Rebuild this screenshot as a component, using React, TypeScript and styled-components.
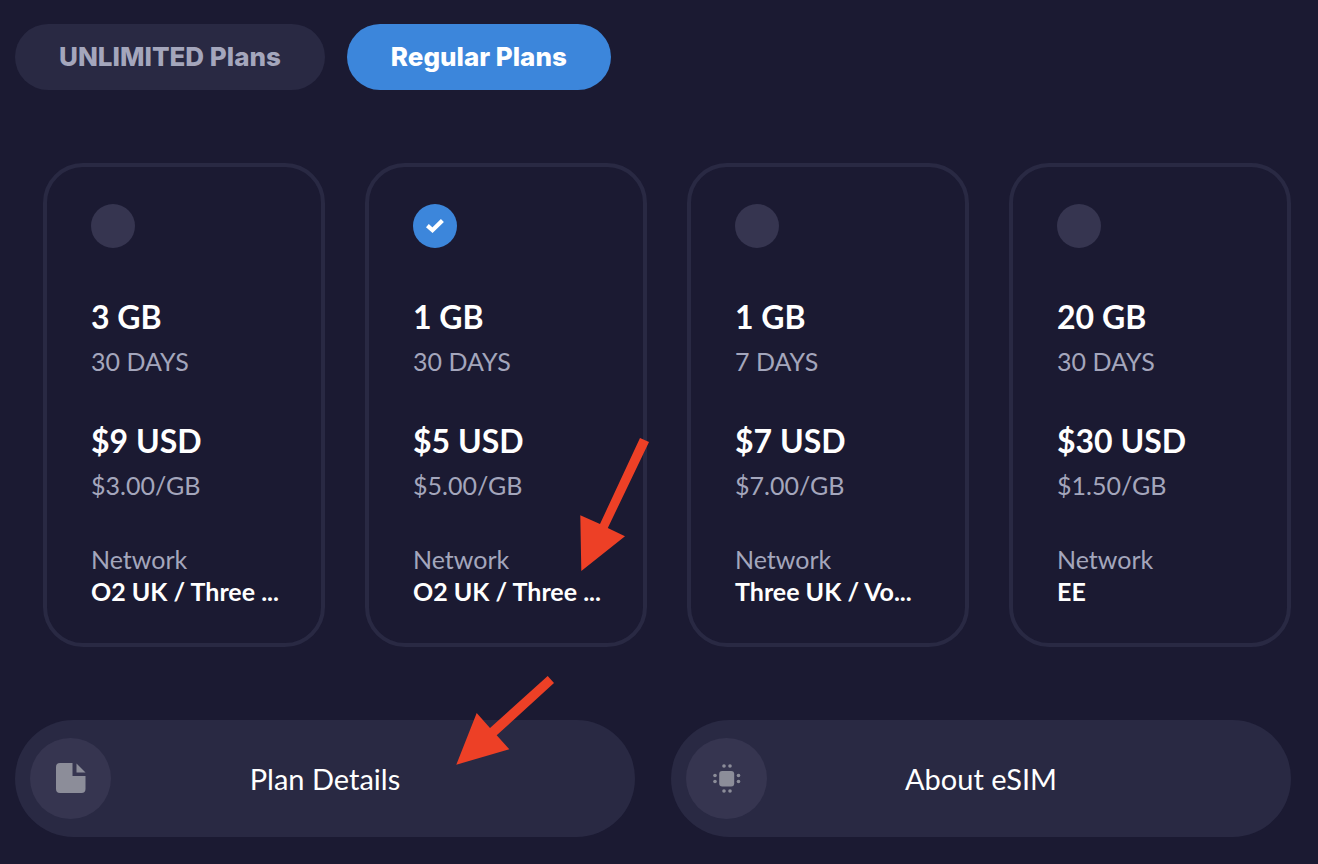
import React, { useState } from "react";
import styled, { createGlobalStyle } from "styled-components";

const GlobalStyle = createGlobalStyle`
  *, *::before, *::after { box-sizing: border-box; }
  body {
    margin: 0;
    background: #1b1a32;
    color: #ffffff;
    font-family: Lato, "Liberation Sans", sans-serif;
  }
  button, input { font: inherit; color: inherit; margin: 0; }
`;

const Page = styled.main`
  padding: 24px 27px 27px 15px;
`;

const Tabs = styled.div`
  display: flex;
  gap: 22px;
`;

const Tab = styled.button<{ $active: boolean }>`
  height: 66px;
  padding: 0 44px;
  border: 0;
  border-radius: 33px;
  background: ${(p) => (p.$active ? "#3c86db" : "#292943")};
  color: ${(p) => (p.$active ? "#ffffff" : "#a4a6bc")};
  font-family: Inter, "Liberation Sans", sans-serif;
  font-size: 26px;
  font-weight: 800;
  line-height: 32px;
  white-space: nowrap;
  cursor: pointer;
`;

const Plans = styled.div`
  display: grid;
  grid-template-columns: repeat(4, minmax(0, 1fr));
  gap: 40px;
  margin: 73px 0 73px 28px;
`;

const PlanCard = styled.label`
  position: relative;
  display: flex;
  flex-direction: column;
  gap: 36px;
  padding: 37px 44px 36px;
  border: 4px solid #292943;
  border-radius: 40px;
  white-space: nowrap;
  cursor: pointer;
`;

const RadioWrap = styled.span`
  display: grid;
  width: 44px;
  height: 44px;
  margin-bottom: 11px;
  place-items: center;

  > * { grid-area: 1 / 1; }
`;

const Radio = styled.input`
  appearance: none;
  width: 44px;
  height: 44px;
  border-radius: 50%;
  background: #363550;
  cursor: pointer;

  &:checked { background: #3c86db; }
`;

const Group = styled.span`
  display: flex;
  flex-direction: column;
`;

const Headline = styled.span`
  font-size: 32px;
  font-weight: 700;
  line-height: 44px;
`;

const Detail = styled.span`
  color: #a4a6bc;
  font-size: 25px;
  line-height: 44px;
`;

const NetworkLabel = styled(Detail)`
  line-height: 32px;
`;

const NetworkName = styled.span`
  font-size: 25px;
  font-weight: 700;
  line-height: 32px;
`;

const Actions = styled.div`
  display: grid;
  grid-template-columns: repeat(2, minmax(0, 1fr));
  gap: 36px;
`;

const ActionButton = styled.button`
  position: relative;
  display: grid;
  grid-template-columns: 81px 1fr 81px;
  align-items: center;
  padding: 18px 15px;
  border: 0;
  border-radius: 60px;
  background: #292943;
  font-size: 29px;
  line-height: 36px;
  cursor: pointer;
`;

const IconCircle = styled.span`
  display: grid;
  width: 81px;
  height: 81px;
  place-items: center;
  border-radius: 50%;
  background: #363550;
`;

const CardArrow = styled.svg`
  position: absolute;
  top: 271px;
  right: -7px;
  pointer-events: none;
`;

const ActionArrow = styled.svg`
  position: absolute;
  top: -44px;
  right: 81px;
  pointer-events: none;
`;

const plans = [
  { data: "3 GB", days: "30 DAYS", price: "$9 USD", rate: "$3.00/GB", network: "O2 UK / Three ..." },
  { data: "1 GB", days: "30 DAYS", price: "$5 USD", rate: "$5.00/GB", network: "O2 UK / Three ..." },
  { data: "1 GB", days: "7 DAYS", price: "$7 USD", rate: "$7.00/GB", network: "Three UK / Vo..." },
  { data: "20 GB", days: "30 DAYS", price: "$30 USD", rate: "$1.50/GB", network: "EE" },
];

const tabs = ["UNLIMITED Plans", "Regular Plans"];

const CheckMark = () => (
  <svg width="20" height="18" viewBox="0 0 20 18" fill="none" pointerEvents="none" aria-hidden="true">
    <path d="M2.4 8.6 7.5 13.2 17.4 3.4" stroke="#fff" strokeWidth="4.2" />
  </svg>
);

const NoteIcon = () => (
  <svg width="30" height="31" viewBox="0 0 30 31" fill="#8c8d99" aria-hidden="true">
    <path d="M4 0H16.5V13H29.5V26a4 4 0 0 1-4 4H4a4 4 0 0 1-4-4V4a4 4 0 0 1 4-4Z" />
    <path d="M20.5 0.5 29.5 9.5H20.5Z" />
  </svg>
);

const chipPins = [
  [11, 2], [17, 2], [11, 27], [17, 27],
  [2, 11.5], [2, 17.5], [25.5, 11.5], [25.5, 17.5],
];

const ChipIcon = () => (
  <svg width="28" height="30" viewBox="0 0 28 30" fill="#8c8d99" aria-hidden="true">
    <rect x="6.2" y="7" width="15" height="15.5" rx="3" />
    {chipPins.map(([x, y]) => (
      <circle key={`${x}-${y}`} cx={x} cy={y} r="1.8" />
    ))}
  </svg>
);

export default function App() {
  const [tab, setTab] = useState(1);
  const [selected, setSelected] = useState(1);

  return (
    <>
      <GlobalStyle />
      <Page>
        <Tabs>
          {tabs.map((name, i) => (
            <Tab key={name} type="button" $active={tab === i} aria-pressed={tab === i} onClick={() => setTab(i)}>
              {name}
            </Tab>
          ))}
        </Tabs>

        <Plans role="radiogroup" aria-label="Plans">
          {plans.map((plan, i) => (
            <PlanCard key={i} htmlFor={`plan-${i}`}>
              <RadioWrap>
                <Radio
                  type="radio"
                  name="plan"
                  id={`plan-${i}`}
                  checked={selected === i}
                  onChange={() => setSelected(i)}
                />
                {selected === i && <CheckMark />}
              </RadioWrap>
              <Group>
                <Headline>{plan.data}</Headline>
                <Detail>{plan.days}</Detail>
              </Group>
              <Group>
                <Headline>{plan.price}</Headline>
                <Detail>{plan.rate}</Detail>
              </Group>
              <Group>
                <NetworkLabel>Network</NetworkLabel>
                <NetworkName>{plan.network}</NetworkName>
              </Group>
              {i === 1 && (
                <CardArrow width="70" height="133" viewBox="0 0 70 133" aria-hidden="true">
                  <path d="M60 0 69 4 27.8 90 45 98.3 1.3 133 0.3 77.3 20 86Z" fill="#ed4026" />
                </CardArrow>
              )}
            </PlanCard>
          ))}
        </Plans>

        <Actions>
          <ActionButton type="button">
            <IconCircle><NoteIcon /></IconCircle>
            <span>Plan Details</span>
            <ActionArrow width="98" height="89" viewBox="0 0 98 89" aria-hidden="true">
              <path d="M91.7 0 98 7 40.7 59.3 53.3 73.3 0.3 88.7 20.7 37 34 52Z" fill="#ed4026" />
            </ActionArrow>
          </ActionButton>
          <ActionButton type="button">
            <IconCircle><ChipIcon /></IconCircle>
            <span>About eSIM</span>
          </ActionButton>
        </Actions>
      </Page>
    </>
  );
}
